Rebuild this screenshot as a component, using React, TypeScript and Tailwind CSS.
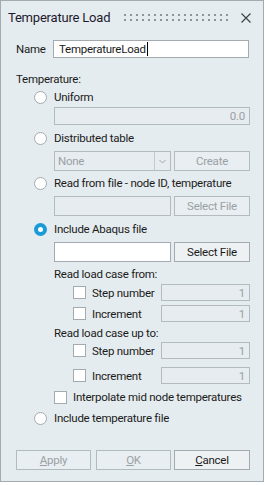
import React from "react";

const F = { fontFamily: 'Roboto, "Liberation Sans", sans-serif' };

function Radio({ checked = false }: { checked?: boolean }) {
  if (checked)
    return (
      <span className="w-[13px] h-[13px] rounded-full bg-[#1a9ad6] flex items-center justify-center shrink-0">
        <span className="w-[5px] h-[5px] rounded-full bg-white" />
      </span>
    );
  return <span className="w-[13px] h-[13px] rounded-full bg-white border border-[#a3abb0] shrink-0" />;
}

function Check() {
  return <span className="w-[13px] h-[13px] bg-white border border-[#a3abb0] shrink-0" />;
}

function DisabledBox({ w, h, text }: { w: string; h: string; text?: string }) {
  return (
    <div className={`${w} ${h} shrink-0 border border-[#b4bbbf] bg-[#e6ecef] flex items-center justify-end pr-[4px] text-[#9aa1a5]`}>
      {text}
    </div>
  );
}

function Btn({ w, children, disabled = false }: { w: string; children: React.ReactNode; disabled?: boolean }) {
  return (
    <div
      className={`${w} h-[20px] shrink-0 border flex items-center justify-center whitespace-nowrap ${
        disabled ? "border-[#b4bbbf] text-[#9aa1a5] bg-[#e8eef1]" : "border-[#a3abb0] text-[#1b1b1b] bg-[#edf1f3]"
      }`}
    >
      {children}
    </div>
  );
}

export default function App() {
  return (
    <div className="w-[265px] h-[485px] bg-white" style={F}>
      <div className="w-[264px] h-[482px] border border-[#a4abb0] bg-[#e5ecef] text-[11.5px] leading-[16px] tracking-[-0.25px] text-[#1b1b1b] flex flex-col whitespace-nowrap">
        {/* title bar */}
        <div className="h-[33px] flex items-center pl-[7px] pr-[12px] shrink-0">
          <span className="text-[13px] tracking-[-0.2px] text-[#1e1a2e] w-[116px] shrink-0">Temperature Load</span>
          <div className="grid grid-cols-[repeat(18,2px)] gap-x-[4px] gap-y-[3px] shrink-0">
            {Array.from({ length: 36 }).map((_, i) => (
              <span key={i} className="w-[2px] h-[2px] bg-[#8c959b]" />
            ))}
          </div>
          <svg className="ml-auto shrink-0" width="10" height="10" viewBox="0 0 10 10">
            <path d="M0.5 0.5 L9.5 9.5 M9.5 0.5 L0.5 9.5" stroke="#3a3f44" strokeWidth="1.1" />
          </svg>
        </div>
        {/* name */}
        <div className="mt-[6px] flex items-center pl-[15px]">
          <span className="w-[37px] shrink-0">Name</span>
          <div className="w-[196px] h-[18px] shrink-0 bg-white border border-[#a3abb0] flex items-center pl-[5px]">
            <span>TemperatureLoad</span>
            <span className="w-[1px] h-[14px] bg-black ml-[1px]" />
          </div>
        </div>
        <div className="mt-[13px] pl-[15px] h-[16px]">Temperature:</div>
        <div className="pl-[33px] flex flex-col">
          <div className="mt-[2px] h-[16px] flex items-center gap-[7px]">
            <Radio />
            <span>Uniform</span>
          </div>
          <div className="mt-[2px] ml-[20px]">
            <DisabledBox w="w-[196px]" h="h-[18px]" text="0.0" />
          </div>
          <div className="mt-[5px] h-[16px] flex items-center gap-[7px]">
            <Radio />
            <span>Distributed table</span>
          </div>
          <div className="mt-[5px] ml-[20px] flex gap-[3px]">
            <div className="w-[117px] h-[20px] shrink-0 border border-[#b4bbbf] bg-[#e6ecef] flex">
              <span className="flex-1 pl-[3px] text-[#9aa1a5] leading-[18px]">None</span>
              <span className="w-[16px] border-l border-[#c3c9cc] flex items-center justify-center">
                <svg width="7" height="5" viewBox="0 0 7 5">
                  <path d="M0.5 1 L3.5 4 L6.5 1" stroke="#a0a7ab" strokeWidth="1" fill="none" />
                </svg>
              </span>
            </div>
            <Btn w="w-[76px]" disabled>Create</Btn>
          </div>
          <div className="mt-[4px] h-[16px] flex items-center gap-[7px]">
            <Radio />
            <span>Read from file - node ID, temperature</span>
          </div>
          <div className="mt-[5px] ml-[20px] flex gap-[3px]">
            <DisabledBox w="w-[117px]" h="h-[20px]" />
            <Btn w="w-[76px]" disabled>Select File</Btn>
          </div>
          <div className="mt-[5px] h-[16px] flex items-center gap-[7px]">
            <Radio checked />
            <span>Include Abaqus file</span>
          </div>
          <div className="mt-[5px] ml-[20px] flex gap-[3px]">
            <div className="w-[117px] h-[20px] shrink-0 bg-white border border-[#a3abb0]" />
            <Btn w="w-[76px]">Select File</Btn>
          </div>
          <div className="ml-[20px] flex flex-col">
            <div className="mt-[4px] h-[16px]">Read load case from:</div>
            {["Step number", "Increment"].map((t, i) => (
              <div key={"a" + t} className={`${i === 0 ? "mt-[2px]" : "mt-[4px]"} ml-[19px] flex items-center`}>
                <Check />
                <span className="ml-[6px] w-[69px] shrink-0">{t}</span>
                <DisabledBox w="w-[89px]" h="h-[17px]" text="1" />
              </div>
            ))}
            <div className="mt-[3px] h-[16px]">Read load case up to:</div>
            {["Step number", "Increment"].map((t, i) => (
              <div key={"b" + t} className={`${i === 0 ? "mt-[1px]" : "mt-[8px]"} ml-[19px] flex items-center`}>
                <Check />
                <span className="ml-[6px] w-[69px] shrink-0">{t}</span>
                <DisabledBox w="w-[89px]" h="h-[17px]" text="1" />
              </div>
            ))}
            <div className="mt-[5px] h-[16px] flex items-center">
              <Check />
              <span className="ml-[6px]">Interpolate mid node temperatures</span>
            </div>
          </div>
          <div className="mt-[5px] h-[16px] flex items-center gap-[7px]">
            <Radio />
            <span>Include temperature file</span>
          </div>
        </div>
        <div className="mt-[24px] pl-[15px] flex">
          <Btn w="w-[75px]" disabled>
            <span><span className="underline">A</span>pply</span>
          </Btn>
          <div className="ml-[5px]">
            <Btn w="w-[75px]" disabled>
              <span><span className="underline">O</span>K</span>
            </Btn>
          </div>
          <div className="ml-[3px]">
            <Btn w="w-[76px]">
              <span><span className="underline">C</span>ancel</span>
            </Btn>
          </div>
        </div>
      </div>
    </div>
  );
}
